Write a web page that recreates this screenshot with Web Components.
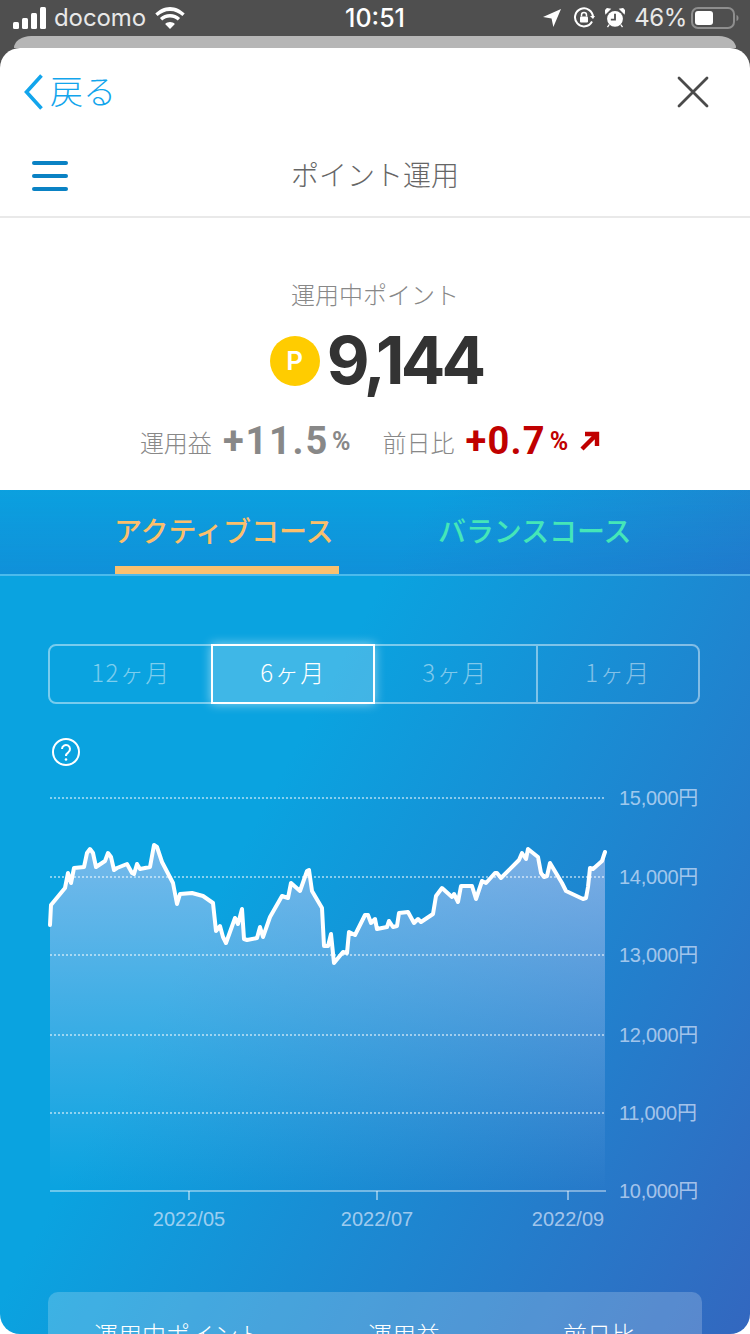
<!DOCTYPE html>
<html lang="ja">
<head>
<meta charset="utf-8">
<title>ポイント運用</title>
<style>
  html, body { margin: 0; height: 1334px; overflow: hidden; background: #4f4f4f; }
  body { font-family: "Noto Sans CJK JP", sans-serif; }
</style>
</head>
<body>
<app-status-bar></app-status-bar>
<app-sheet>
  <nav-header title-text="ポイント運用"></nav-header>
  <point-summary></point-summary>
  <course-panel>
    <period-selector></period-selector>
    <value-chart></value-chart>
    <summary-card></summary-card>
  </course-panel>
</app-sheet>

<script>
// Status bar of the phone
class AppStatusBar extends HTMLElement {
  constructor() {
    super();
    this.attachShadow({ mode: "open" });
  }

  connectedCallback() {
    this.shadowRoot.innerHTML = `
      <style>
        :host { display: grid; grid-template-columns: 1fr auto 1fr; align-items: center; height: 36px; padding: 0 11px 0 13px; color: #fff;
                font: 400 24px/36px Inter, "Liberation Sans", sans-serif; }
        .left, .right { display: flex; align-items: center; }
        .right { justify-content: flex-end; }
        .carrier { margin: 0 9px 0 8px; color: #e8e8e8; letter-spacing: -.1px; }
        .time { font-weight: 500; font-size: 25px; margin-right: 2px; }
        .pct { margin: 0 4px 0 9px; color: #e8e8e8; letter-spacing: -.4px; }
        svg { display: block; }
      </style>
      <div class="left">
        <svg width="33" height="22" viewBox="0 0 33 22" fill="#fff">
          <rect x="0" y="15" width="6" height="7" rx="1.5"/>
          <rect x="9" y="11" width="6" height="11" rx="1.5"/>
          <rect x="18" y="6" width="6" height="16" rx="1.5"/>
          <rect x="27" y="0" width="6" height="22" rx="1.5"/>
        </svg>
        <span class="carrier">docomo</span>
        <svg width="30" height="22" viewBox="0 0 30 22" fill="#fff">
          <path d="M15 4c5 0 9 2 12.4 5l2.3-2.5C25.700 2.800 20.600 0 15 0S4.300 2.800.3 6.500L2.600 9C6 6 10 4 15 4z"/>
          <path d="M15 10.500c3 0 5.600 1.100 7.800 3l2.300-2.500c-2.800-2.500-6.200-4-10.100-4s-7.300 1.500-10.100 4l2.300 2.500c2.200-1.900 4.800-3 7.800-3z"/>
          <path d="M15 15c-1.900 0-3.500.7-4.900 1.900L15 22l4.900-5.100C18.500 15.700 16.900 15 15 15z"/>
        </svg>
      </div>
      <span class="time">10:51</span>
      <div class="right">
        <svg width="18" height="18" viewBox="0 0 20 20" fill="#fff"><path d="M20 0 0 9l9.500 1.500L11.500 20z"/></svg>
        <svg width="22" height="22" viewBox="0 0 22 22" style="margin-left:12px" fill="none" stroke="#fff" stroke-width="2">
          <path d="M19 14.500A9 9 0 1 1 20 10"/><path d="M17 9l3 3 2-3" fill="#fff" stroke="none"/>
          <rect x="7" y="9.500" width="8" height="6" rx="1" fill="#fff" stroke="none"/><path d="M8.500 9.500V8a2.500 2.500 0 0 1 5 0v1.500" stroke-width="1.500"/>
        </svg>
        <svg width="20" height="22" viewBox="0 0 24 24" style="margin-left:10px" fill="#fff">
          <circle cx="12" cy="13" r="9.500"/>
          <path d="M1 6.500 6 1.500 2.500.8.500 3zM23 6.500 18 1.500 21.500.8 23.500 3zM5 20l-2 3M19 20l2 3" stroke="#fff" stroke-width="1.500"/>
          <path d="M12 7v7H7" stroke="#4f4f4f" stroke-width="2.200" fill="none"/>
        </svg>
        <span class="pct">46%</span>
        <svg width="48" height="24" viewBox="0 0 48 24">
          <rect x="1" y="2" width="42" height="20" rx="6" fill="none" stroke="#8e8e8e" stroke-width="2"/>
          <rect x="4" y="5" width="18" height="14" rx="3" fill="#fff"/>
          <path d="M45.500 9c1.500.5 2 1.500 2 3s-.5 2.500-2 3z" fill="#8e8e8e"/>
        </svg>
      </div>`;
  }
}

// White sheet that sits over the dark background, with the grey sheet peeking behind it
class AppSheet extends HTMLElement {
  constructor() {
    super();
    this.attachShadow({ mode: "open" });
  }

  connectedCallback() {
    this.shadowRoot.innerHTML = `
      <style>
        :host { display: block; }
        .back { height: 12px; margin: 0 14px; background: #b6b6b6; border-radius: 20px 20px 0 0 / 14px 14px 0 0; }
        .front { background: #fff; border-radius: 20px 20px 0 0; height: 1286px; overflow: hidden; }
      </style>
      <div class="back"></div>
      <div class="front"><slot></slot></div>`;
  }
}

// Back / close row and the menu row with the page title
class NavHeader extends HTMLElement {
  constructor() {
    super();
    this.attachShadow({ mode: "open" });
  }

  connectedCallback() {
    this.shadowRoot.innerHTML = `
      <style>
        :host { display: block; font-family: "Noto Sans CJK JP", sans-serif; }
        .top { display: flex; align-items: center; justify-content: space-between; height: 88px; padding: 0 41px 0 24px; }
        .back { display: flex; align-items: center; gap: 7px; color: #12a5ec; font-size: 33px; line-height: 40px; font-weight: 300; }
        .back span { margin-top: -4px; }
        .menu { position: relative; display: flex; align-items: center; justify-content: center; height: 80px;
                border-bottom: 2px solid #e9e9e9; color: #666; font-size: 28px; font-weight: 300; }
        .menu span { margin-top: -4px; }
        .burger { position: absolute; left: 32px; top: 25px; }
        svg { display: block; }
      </style>
      <div class="top">
        <span class="back">
          <svg width="19" height="36" viewBox="0 0 19 36" fill="none" stroke="#12a5ec" stroke-width="3.600"><path d="M17.500 1.500 2.500 18l15 16.500"/></svg>
          <span>戻る</span>
        </span>
        <svg width="32" height="32" viewBox="0 0 32 32" stroke="#4a4a4a" stroke-width="2.800" stroke-linecap="round"><path d="M2 2l28 28M30 2 2 30"/></svg>
      </div>
      <div class="menu">
        <svg class="burger" width="36" height="30" viewBox="0 0 36 30" fill="#0a82c4">
          <rect y="0" width="36" height="4" rx="2"/><rect y="13" width="36" height="4" rx="2"/><rect y="26" width="36" height="4" rx="2"/>
        </svg>
        <span>${this.getAttribute("title-text")}</span>
      </div>`;
  }
}

// Points in operation, with the yield and the day-over-day figures
class PointSummary extends HTMLElement {
  constructor() {
    super();
    this.attachShadow({ mode: "open" });
  }

  connectedCallback() {
    this.shadowRoot.innerHTML = `
      <style>
        :host { display: flex; flex-direction: column; align-items: center; height: 272px; box-sizing: border-box;
                padding-top: 58px; color: #888; font-family: "Noto Sans CJK JP", sans-serif; }
        .label { font-size: 24px; line-height: 36px; font-weight: 300; }
        .amount { display: flex; align-items: center; gap: 7px; height: 76px; margin-top: 10px; margin-left: 2px; }
        .coin { width: 50px; height: 50px; border-radius: 50%; background: #ffcc00; color: #fff; margin-top: 2px;
                display: flex; align-items: center; justify-content: center;
                font: 600 26px/1 Inter, sans-serif; }
        .num { font: 700 66px/76px Inter, sans-serif; color: #333; letter-spacing: -3.800px; }
        .stats { display: flex; align-items: center; height: 48px; margin-top: 19px; margin-left: -10px; }
        .cap { font-size: 24px; font-weight: 300; }
        .val { font: 700 38px/48px Roboto, sans-serif; letter-spacing: 1.800px; margin-left: 11px; }
        .val.red { letter-spacing: 1.200px; }
        .unit { font: 700 25px/48px Roboto, sans-serif; margin-left: 3px; position: relative; top: 1px; }
        .unit.red { margin-left: 4px; }
        .red { color: #c00000; }
        .day { margin-left: 32px; }
        .arrow { margin-left: 12px; display: block; }
      </style>
      <div class="label">運用中ポイント</div>
      <div class="amount"><span class="coin">P</span><span class="num">9,144</span></div>
      <div class="stats">
        <span class="cap">運用益</span><span class="val">+11.5</span><span class="unit">%</span>
        <span class="cap day">前日比</span><span class="val red">+0.7</span><span class="unit red">%</span>
        <svg class="arrow" width="20" height="20" viewBox="0 0 20 20" fill="none" stroke="#c00000" stroke-width="4.400"><path d="M2 18 16.500 3.500M5 3h12v12"/></svg>
      </div>`;
  }
}

// Blue panel with the course tabs; the period selector, chart and card are slotted in
class CoursePanel extends HTMLElement {
  constructor() {
    super();
    this.attachShadow({ mode: "open" });
  }

  connectedCallback() {
    this.shadowRoot.innerHTML = `
      <style>
        :host { display: block; height: 844px; overflow: hidden; border-radius: 0 0 20px 20px;
                background: linear-gradient(118deg, #0aa3e0 36%, #3367bf 100%);
                font-family: "Noto Sans CJK JP", sans-serif; }
        .tabs { display: flex; height: 84px; border-bottom: 2px solid rgba(120,205,245,.6);
                background: linear-gradient(180deg, rgba(40,70,190,.03), rgba(40,70,190,.2)); }
        .tab { position: relative; font-size: 28px; line-height: 80px; font-weight: 500; }
        .active { margin-left: 115px; width: 224px; color: #fbbf6b; text-indent: -1px; }
        .active::after { content: ""; position: absolute; left: 0; right: 0; bottom: 0; height: 8px; background: #fac06f; }
        .other { margin-left: 99px; color: #45e6b8; letter-spacing: -.1px; }
      </style>
      <div class="tabs">
        <span class="tab active">アクティブコース</span>
        <span class="tab other">バランスコース</span>
      </div>
      <slot></slot>`;
  }
}

// 12 / 6 / 3 / 1 month selector
class PeriodSelector extends HTMLElement {
  constructor() {
    super();
    this.attachShadow({ mode: "open" });
  }

  connectedCallback() {
    const periodos = ["12ヶ月", "6ヶ月", "3ヶ月", "1ヶ月"];
    this.shadowRoot.innerHTML = `
      <style>
        :host { display: block; margin: 68px 50px 0 48px; }
        .seg { display: grid; grid-template-columns: repeat(4, 1fr); height: 60px; box-sizing: border-box;
               border: 2px solid rgba(255,255,255,.45); border-radius: 8px; font-family: "Noto Sans CJK JP", sans-serif; }
        .cell { display: flex; align-items: center; justify-content: center; font-size: 24px; font-weight: 300;
                letter-spacing: 1.500px; color: rgba(255,255,255,.48); padding-bottom: 6px; }
        .cell:last-child { border-left: 2px solid rgba(255,255,255,.45); }
        .sel { color: #fff; background: rgba(255,255,255,.22); margin: -2px -1px; outline: 2px solid #fff; outline-offset: -2px;
               box-shadow: 0 0 10px rgba(255,255,255,.55); position: relative; }
      </style>
      <div class="seg">
        ${periodos.map((p, i) => `<div class="cell ${i === 1 ? "sel" : ""}">${p}</div>`).join("")}
      </div>`;
  }
}

// Line chart. The viewBox uses the page coordinates so the points read like the screenshot
class ValueChart extends HTMLElement {
  constructor() {
    super();
    this.attachShadow({ mode: "open" });
  }

  connectedCallback() {
    const puntos = "50,925 51,905 65,888 68,873 71,883 74,868 84,867 87,853 90,849 93,853 96,867 105,861 108,853 111,857 114,870 117,868 127,864 132,873 134,874 137,864 140,869 150,867 154,845 157,847 162,862 173,883 177,904 180,894 192,893 203,896 213,903 216,931 220,926 223,937 226,943 235,918 238,924 242,909 244,939 247,940 257,938 260,927 263,937 270,917 282,896 288,898 291,883 300,891 307,871 309,870 312,891 322,908 324,946 328,946 331,934 334,963 343,952 347,953 349,932 355,935 365,915 368,915 371,923 375,919 377,929 387,927 389,921 393,927 397,926 399,913 408,912 414,923 418,919 421,922 433,914 436,896 442,888 452,897 454,894 458,902 461,886 472,886 476,899 482,881 486,883 495,873 497,873 501,878 519,860 522,853 526,859 528,849 538,857 541,873 544,877 547,876 550,863 562,883 566,891 583,899 586,898 588,887 590,868 593,869 602,861 605,852";
    const escala = [[798, "15,000円"], [877, "14,000円"], [955, "13,000円"], [1035, "12,000円"], [1113, "11,000円"]];
    const meses = [[189, "2022/05"], [377, "2022/07"], [568, "2022/09"]];
    this.shadowRoot.innerHTML = `
      <style>
        :host { display: block; margin-top: 34px; }
        .help { display: block; margin-left: 52px; }
        .plot { display: block; margin-top: 14px; }
        text { font-family: "Liberation Sans", "Noto Sans CJK JP", sans-serif; font-size: 20px; fill: rgba(235,240,255,.65); letter-spacing: -.3px; }
        .mes { letter-spacing: 0; }
      </style>
      <svg class="help" width="28" height="28" viewBox="0 0 28 28" fill="none" stroke="#fff" stroke-width="2">
        <circle cx="14" cy="14" r="13"/>
        <path d="M10 11a4 4 0 1 1 6.300 3.300c-1.500 1-2.300 1.700-2.300 3.700"/>
        <circle cx="14" cy="21.500" r="1.300" fill="#fff" stroke="none"/>
      </svg>
      <svg class="plot" width="750" height="460" viewBox="0 780 750 460">
        <defs>
          <linearGradient id="relleno" x1="0" y1="840" x2="0" y2="1190" gradientUnits="userSpaceOnUse">
            <stop offset="0" stop-color="#bcc8f2" stop-opacity=".62"/>
            <stop offset="1" stop-color="#a8c4f0" stop-opacity="0"/>
          </linearGradient>
        </defs>
        <polygon points="50,1190 ${puntos} 605,1190" fill="url(#relleno)"/>
        ${escala.map(([y, t]) => `
          <line x1="50" x2="605" y1="${y}" y2="${y}" stroke="rgba(255,255,255,.5)" stroke-width="2" stroke-dasharray="2 2"/>
          <text x="619" y="${y + 7}">${t}</text>`).join("")}
        <line x1="50" x2="606" y1="1191" y2="1191" stroke="rgba(255,255,255,.4)" stroke-width="2"/>
        <text x="619" y="1198">10,000円</text>
        ${meses.map(([x, t]) => `
          <line x1="${x}" x2="${x}" y1="1191" y2="1200" stroke="rgba(255,255,255,.45)" stroke-width="2"/>
          <text class="mes" x="${x}" y="1226" text-anchor="middle">${t}</text>`).join("")}
        <polyline points="${puntos}" fill="none" stroke="#fff" stroke-width="4" stroke-linejoin="round" stroke-linecap="round"/>
      </svg>`;
  }
}

// Table card cut by the bottom edge of the screen
class SummaryCard extends HTMLElement {
  constructor() {
    super();
    this.attachShadow({ mode: "open" });
  }

  connectedCallback() {
    this.shadowRoot.innerHTML = `
      <style>
        :host { display: block; margin: 52px 48px 0; height: 120px; border-radius: 10px;
                background: rgba(255,255,255,.2); color: #fff; font-family: "Noto Sans CJK JP", sans-serif; }
        .row { display: grid; grid-template-columns: 260px 192px 198px; padding-top: 24px; font-size: 24px; line-height: 36px; font-weight: 300; text-align: center; }
      </style>
      <div class="row"><span>運用中ポイント</span><span>運用益</span><span>前日比</span></div>`;
  }
}

customElements.define("app-status-bar", AppStatusBar);
customElements.define("app-sheet", AppSheet);
customElements.define("nav-header", NavHeader);
customElements.define("point-summary", PointSummary);
customElements.define("course-panel", CoursePanel);
customElements.define("period-selector", PeriodSelector);
customElements.define("value-chart", ValueChart);
customElements.define("summary-card", SummaryCard);
</script>
</body>
</html>
